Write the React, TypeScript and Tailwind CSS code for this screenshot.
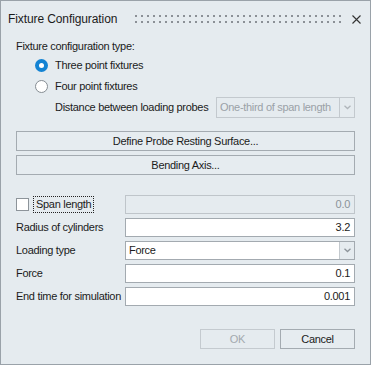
import React from "react";

function Radio({ checked }: { checked?: boolean }) {
  return checked ? (
    <span className="flex h-[13px] w-[13px] items-center justify-center rounded-full bg-[#1383d3]">
      <span className="h-[5px] w-[5px] rounded-full bg-white" />
    </span>
  ) : (
    <span className="h-[13px] w-[13px] rounded-full border border-[#858d93] bg-white" />
  );
}

function Chevron({ color }: { color: string }) {
  return (
    <svg width="7" height="5" viewBox="0 0 7 5">
      <path d="M0.5 0.8 L3.5 3.6 L6.5 0.8" fill="none" stroke={color} strokeWidth="1.3" />
    </svg>
  );
}

function Row({ label, children }: { label: React.ReactNode; children: React.ReactNode }) {
  return (
    <div className="flex items-center">
      <div className="w-[109px] shrink-0 whitespace-nowrap">{label}</div>
      <div className="flex-1">{children}</div>
    </div>
  );
}

function Field({ value, disabled }: { value: string; disabled?: boolean }) {
  return (
    <div
      className={
        disabled
          ? "flex h-[19px] items-center justify-end border border-[#bfc5ca] bg-[#e5ebef] pr-[4px] text-[#8b9399]"
          : "flex h-[19px] items-center justify-end border border-[#a3aab0] bg-white pr-[4px]"
      }
    >
      {value}
    </div>
  );
}

export default function App() {
  return (
    <div className="h-[365px] w-[371px] border border-[#9aa2a9] bg-[#e5ebef] font-['Liberation_Sans',Arial,sans-serif] text-[11px] tracking-[-0.3px] text-[#1b1b1b]">
      <div className="flex h-[36px] items-center pl-[7px]">
        <span className="w-[127px] text-[12px] tracking-[-0.1px]">Fixture Configuration</span>
        <svg width="208" height="8">
          <defs>
            <pattern id="grip" width="6" height="6" patternUnits="userSpaceOnUse">
              <rect width="2" height="2" fill="#8b9096" />
            </pattern>
          </defs>
          <rect width="208" height="8" fill="url(#grip)" />
        </svg>
        <svg className="ml-[9px]" width="9" height="9" viewBox="0 0 9 9">
          <path d="M0.5 0.5 L8.5 8.5 M8.5 0.5 L0.5 8.5" stroke="#333" strokeWidth="1.1" />
        </svg>
      </div>

      <div className="flex flex-col px-[15px]">
        <div className="flex h-[18px] items-center">Fixture configuration type:</div>
        <div className="flex h-[21px] items-center gap-[7px] pl-[19px]">
          <Radio checked />
          <span>Three point fixtures</span>
        </div>
        <div className="flex h-[21px] items-center gap-[7px] pl-[19px]">
          <Radio />
          <span>Four point fixtures</span>
        </div>
        <div className="flex h-[21px] items-center pl-[39px]">
          <span className="w-[161px] shrink-0 whitespace-nowrap">Distance between loading probes</span>
          <div className="flex h-[21px] flex-1 items-stretch border border-[#c3c9ce] text-[#9aa1a7]">
            <span className="flex flex-1 items-center pl-[3px]">One-third of span length</span>
            <span className="flex w-[15px] items-center justify-center border-l border-[#c3c9ce]">
              <Chevron color="#b0b6bb" />
            </span>
          </div>
        </div>

        <button className="mt-[13px] flex h-[20px] items-center justify-center border border-[#a4abb1] bg-[#e6ecf0]">
          Define Probe Resting Surface...
        </button>
        <button className="mt-[4px] flex h-[20px] items-center justify-center border border-[#a4abb1] bg-[#e6ecf0]">
          Bending Axis...
        </button>

        <div className="mt-[20px] flex flex-col gap-[4px]">
          <Row
            label={
              <div className="flex items-center">
                <span className="h-[13px] w-[13px] border border-[#8d949a] bg-white" />
                <span className="ml-[4px] border border-dotted border-[#222] px-[2px] py-[1px] leading-[13px]">
                  Span length
                </span>
              </div>
            }
          >
            <Field value="0.0" disabled />
          </Row>
          <Row label="Radius of cylinders">
            <Field value="3.2" />
          </Row>
          <Row label="Loading type">
            <div className="flex h-[19px] items-stretch border border-[#a3aab0] bg-white">
              <span className="flex flex-1 items-center pl-[3px]">Force</span>
              <span className="flex w-[15px] items-center justify-center border-l border-[#c3c9ce] bg-[#e5ebef]">
                <Chevron color="#8d949a" />
              </span>
            </div>
          </Row>
          <Row label="Force">
            <Field value="0.1" />
          </Row>
          <Row label="End time for simulation">
            <Field value="0.001" />
          </Row>
        </div>

        <div className="mt-[23px] flex justify-end gap-[5px]">
          <button className="flex h-[20px] w-[75px] items-center justify-center border border-[#c4cacf] text-[#a3a9ae]">
            OK
          </button>
          <button className="flex h-[20px] w-[75px] items-center justify-center border border-[#a4abb1] bg-[#e6ecf0]">
            Cancel
          </button>
        </div>
      </div>
    </div>
  );
}
